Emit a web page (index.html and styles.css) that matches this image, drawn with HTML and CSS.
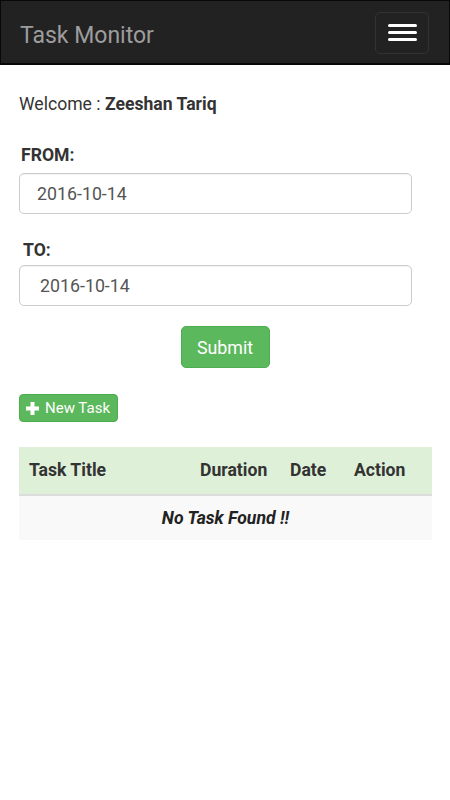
FILE: index.html
```html
<!DOCTYPE html>
<html lang="en">
<head>
<meta charset="utf-8">
<title>Task Monitor</title>
<link rel="stylesheet" href="styles.css">
</head>
<body>
<nav class="navbar">
  <span class="brand">Task Monitor</span>
  <button class="toggle" type="button" aria-label="Toggle navigation">
    <span class="bar"></span>
    <span class="bar"></span>
    <span class="bar"></span>
  </button>
</nav>
<main class="container">
  <p class="welcome">Welcome : <b>Zeeshan Tariq</b></p>
  <form class="filter">
    <label class="label label-from" for="from">FROM:</label>
    <input id="from" class="date-input date-from" type="text" value="2016-10-14">
    <label class="label label-to" for="to">TO:</label>
    <input id="to" class="date-input date-to" type="text" value="2016-10-14">
    <div class="actions">
      <button class="btn btn-submit" type="button">Submit</button>
    </div>
  </form>
  <button class="btn btn-new" type="button">
    <svg class="plus" width="13" height="13" viewBox="0 0 13 13" aria-hidden="true">
      <rect x="4.5" y="0" width="4" height="13" fill="#fff"/>
      <rect x="0" y="4.5" width="13" height="4" fill="#fff"/>
    </svg>
    <span>New Task</span>
  </button>
  <table class="tasks">
    <colgroup>
      <col class="c-title">
      <col class="c-duration">
      <col class="c-date">
      <col class="c-action">
    </colgroup>
    <thead>
      <tr>
        <th>Task Title</th>
        <th>Duration</th>
        <th>Date</th>
        <th>Action</th>
      </tr>
    </thead>
    <tbody>
      <tr>
        <td colspan="4" class="empty">No Task Found !!</td>
      </tr>
    </tbody>
  </table>
</main>
</body>
</html>
```

FILE: styles.css
```css
* { box-sizing: border-box; }

html, body {
  margin: 0;
  padding: 0;
  background: #fff;
}

body {
  font-family: Roboto, "Noto Sans", Arial, sans-serif;
  font-size: 17.6px;
  line-height: 25px;
  color: #333;
}

.navbar {
  height: 65px;
  background: #222;
  border: 1px solid #080808;
  border-bottom-width: 2px;
  display: flex;
  align-items: center;
  justify-content: space-between;
  padding: 0 20px 0 19px;
}

.brand {
  font-size: 23px;
  line-height: 30px;
  color: #9d9d9d;
  margin-top: 7px;
}

.toggle {
  width: 54px;
  height: 42px;
  border: 1px solid #333;
  border-radius: 5px;
  background: transparent;
  display: flex;
  flex-direction: column;
  align-items: center;
  justify-content: center;
  gap: 4px;
  padding: 0;
  margin-top: 1px;
}

.bar {
  display: block;
  width: 29px;
  height: 3px;
  border-radius: 1.5px;
  background: #fff;
}

.container {
  padding: 0 19px;
}

.welcome {
  margin: 27px 0 0;
}

.filter {
  display: flex;
  flex-direction: column;
  align-items: flex-start;
}

.label {
  display: block;
  font-weight: bold;
  padding-left: 2px;
}

.label-from {
  margin-top: 26px;
  margin-bottom: 5px;
}

.label-to {
  margin-top: 24px;
  margin-bottom: 2px;
  padding-left: 4px;
}

.date-input {
  width: 393px;
  height: 41px;
  border: 1px solid #ccc;
  border-radius: 5px;
  font-family: inherit;
  font-size: 17.8px;
  color: #555;
  background: #fff;
  padding: 0 10px 0 17px;
  box-shadow: inset 0 1px 1px rgba(0,0,0,0.05);
  outline: none;
}

.date-to {
  padding-left: 20px;
}

.actions {
  align-self: stretch;
  display: flex;
  justify-content: center;
  margin-top: 20px;
}

.btn {
  font-family: inherit;
  color: #fff;
  background: #5cb85c;
  border: 1px solid #4cae4c;
  cursor: pointer;
}

.btn-submit {
  width: 89px;
  height: 42px;
  border-radius: 5px;
  font-size: 17.8px;
  padding: 0;
}

.btn-new {
  margin-top: 26px;
  width: 99px;
  height: 28px;
  border-radius: 4px;
  font-size: 15px;
  display: flex;
  align-items: center;
  gap: 6px;
  padding: 0 0 0 6px;
}

.plus {
  display: block;
  flex: none;
}

.tasks {
  margin-top: 25px;
  width: 413px;
  border-collapse: collapse;
  table-layout: fixed;
}

.c-title { width: 171px; }
.c-duration { width: 90px; }
.c-date { width: 64px; }
.c-action { width: 88px; }

.tasks th {
  height: 48px;
  text-align: left;
  font-weight: bold;
  background: #dff0d8;
  border-bottom: 2px solid #ddd;
  padding: 0 10px;
  vertical-align: middle;
}

.tasks td {
  height: 45px;
  background: #f9f9f9;
  padding: 0 10px;
  vertical-align: middle;
}

.empty {
  text-align: center;
  font-weight: bold;
  font-style: italic;
  color: #222;
}
```
